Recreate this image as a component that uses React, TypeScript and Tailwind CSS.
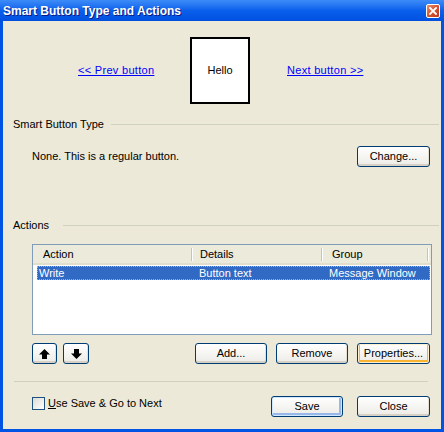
import React from "react";

const font = { fontFamily: '"Liberation Sans", Arial, sans-serif' };

function XPButton({
  children,
  w = "w-[73px]",
  variant = "normal",
}: {
  children: React.ReactNode;
  w?: string;
  variant?: "normal" | "default" | "focus";
}) {
  const inner =
    variant === "default"
      ? "shadow-[inset_0_0_0_1px_#CEE7FF,inset_-1px_-1px_0_2px_#98B8EA]"
      : variant === "focus"
      ? "shadow-[inset_0_0_0_1px_#FFF0CF,inset_0_-1px_0_2px_#F8B330]"
      : "shadow-[inset_0_-2px_0_0_#D6D0C5,inset_-1px_0_0_0_#E3DFD3]";
  return (
    <div
      className={`${w} h-[21px] rounded-[3px] border border-[#003C74] bg-gradient-to-b from-[#FFFFFF] to-[#ECEBE6] ${inner} flex items-center justify-center text-[11px] text-black`}
    >
      {children}
    </div>
  );
}

function GroupLabel({ label, lineClass }: { label: string; lineClass: string }) {
  return (
    <div className="flex items-center h-[14px] pl-[10px] pr-[2px]">
      <span className="text-[11px] text-black leading-none">{label}</span>
      <div className={`${lineClass} flex-1 h-px bg-[#D0D0BF]`} />
    </div>
  );
}

export default function App() {
  return (
    <div style={font} className="w-[444px] h-[432px] bg-[#0054E3] flex flex-col overflow-hidden">
      {/* Title bar */}
      <div className="h-[21px] flex items-center bg-gradient-to-b from-[#3C8CF8] via-[#0A5FEB] to-[#0050E0] px-[3px] relative">
        <span className="text-white font-bold text-[12px] leading-none [text-shadow:1px_1px_0_#0A1883]">
          Smart Button Type and Actions
        </span>
        <div className="absolute right-[4px] top-[4px] w-[14px] h-[14px] rounded-[2px] border border-white bg-gradient-to-br from-[#E8906E] via-[#D5532F] to-[#C13A1A] flex items-center justify-center">
          <svg width="8" height="8" viewBox="0 0 8 8">
            <path d="M1 1 L7 7 M7 1 L1 7" stroke="white" strokeWidth="1.8" strokeLinecap="square" />
          </svg>
        </div>
      </div>

      {/* Client area */}
      <div className="flex-1 mx-[3px] mb-[3px] bg-[#ECE9D8] flex flex-col">
        {/* Preview row */}
        <div className="mt-[16px] h-[67px] flex items-center">
          <span className="ml-[75px] w-[77px] text-[11px] text-[#0000FF] underline leading-none tracking-[0.3px]">
            &lt;&lt; Prev button
          </span>
          <div className="ml-[35px] w-[60px] h-[67px] border-2 border-black bg-white flex items-center justify-center text-[11px] text-black">
            Hello
          </div>
          <span className="ml-[37px] text-[11px] text-[#0000FF] underline leading-none tracking-[0.3px]">
            Next button &gt;&gt;
          </span>
        </div>

        {/* Smart Button Type */}
        <div className="mt-[13px]">
          <GroupLabel label="Smart Button Type" lineClass="ml-[7px]" />
        </div>
        <div className="mt-[15px] flex items-center pl-[29px] pr-[11px]">
          <span className="flex-1 text-[11px] text-black">None. This is a regular button.</span>
          <XPButton>Change...</XPButton>
        </div>

        {/* Actions */}
        <div className="mt-[51px]">
          <GroupLabel label="Actions" lineClass="ml-[14px]" />
        </div>

        <div className="mt-[12px] ml-[29px] w-[400px] h-[91px] border border-[#7F9DB9] bg-white flex flex-col">
          <div className="h-[20px] flex bg-[#EBEADB] border-b-[2px] border-[#E2DECD] text-[11px] text-black">
            <div className="w-[160px] flex items-center pl-[10px] relative">
              Action
              <div className="absolute right-0 top-[3px] bottom-[2px] w-[2px] border-l border-[#C7C5B2] bg-white" />
            </div>
            <div className="w-[130px] flex items-center pl-[7px] relative">
              Details
              <div className="absolute right-0 top-[3px] bottom-[2px] w-[2px] border-l border-[#C7C5B2] bg-white" />
            </div>
            <div className="flex-1 flex items-center pl-[9px] relative">
              Group
              <div className="absolute right-[2px] top-[3px] bottom-[2px] w-[2px] border-l border-[#C7C5B2] bg-white" />
            </div>
          </div>
          <div className="mt-[1px] ml-[4px] mr-[1px] h-[14px] bg-[#316AC5] border border-dotted border-[#E5A640] flex items-center text-[11px] text-white">
            <span className="w-[156px] pl-[1px]">Write</span>
            <span className="w-[130px] pl-[5px]">Button text</span>
            <span className="flex-1 pl-[5px]">Message Window</span>
          </div>
        </div>

        {/* List buttons */}
        <div className="mt-[8px] flex items-center pl-[29px]">
          <XPButton w="w-[25px]">
            <svg width="11" height="10" viewBox="0 0 11 10">
              <path d="M5.5 0 L11 5.5 L8 5.5 L8 10 L3 10 L3 5.5 L0 5.5 Z" fill="black" />
            </svg>
          </XPButton>
          <div className="ml-[6px]">
            <XPButton w="w-[26px]">
              <svg width="11" height="10" viewBox="0 0 11 10">
                <path d="M5.5 10 L11 4.5 L8 4.5 L8 0 L3 0 L3 4.5 L0 4.5 Z" fill="black" />
              </svg>
            </XPButton>
          </div>
          <div className="ml-[106px]">
            <XPButton w="w-[72px]">Add...</XPButton>
          </div>
          <div className="ml-[9px]">
            <XPButton w="w-[72px]">Remove</XPButton>
          </div>
          <div className="ml-[9px]">
            <XPButton variant="focus">Properties...</XPButton>
          </div>
        </div>

        {/* Separator */}
        <div className="mt-[17px] ml-[11px] mr-[13px] h-px bg-[#D0D0BF]" />

        {/* Bottom row */}
        <div className="mt-[14px] flex items-center pl-[29px] pr-[11px]">
          <div className="flex items-center self-start mt-[1px]">
            <div className="w-[13px] h-[13px] border border-[#1C5180] bg-gradient-to-br from-[#DCDBD5] to-[#FFFFFF]" />
            <span className="ml-[3px] text-[11px] text-black leading-none">
              <span className="underline">U</span>se Save &amp; Go to Next
            </span>
          </div>
          <div className="flex-1" />
          <XPButton variant="default" w="w-[72px]">Save</XPButton>
          <div className="ml-[14px]">
            <XPButton>Close</XPButton>
          </div>
        </div>
      </div>
    </div>
  );
}
